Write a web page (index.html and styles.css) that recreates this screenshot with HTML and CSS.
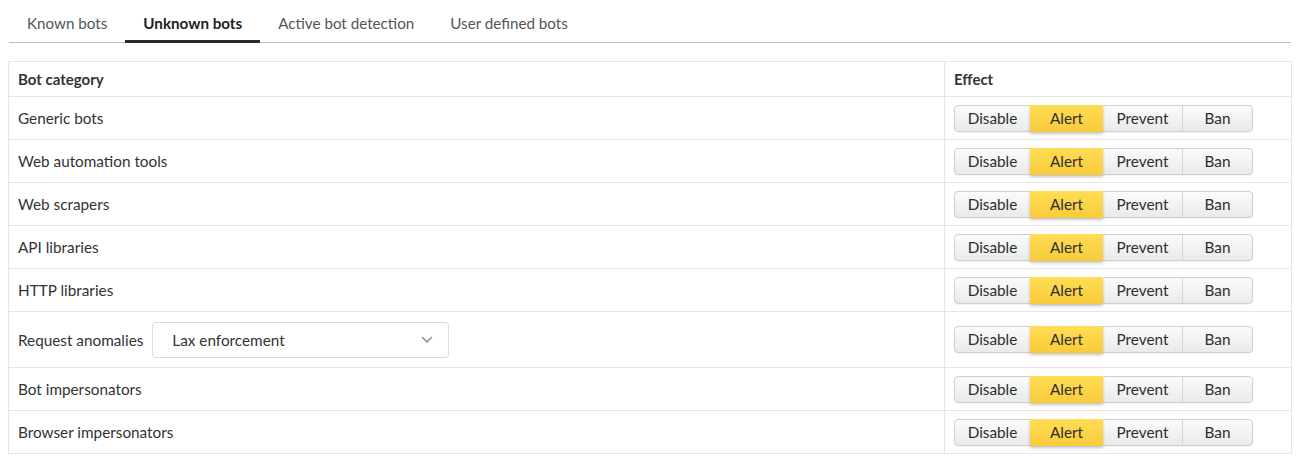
FILE: index.html
```html
<!DOCTYPE html>
<html lang="en">
<head>
<meta charset="utf-8">
<title>Unknown bots</title>
<link rel="stylesheet" href="styles.css">
</head>
<body>
<div class="page">
  <nav class="tabs">
    <a class="tab">Known bots</a>
    <a class="tab active">Unknown bots</a>
    <a class="tab">Active bot detection</a>
    <a class="tab">User defined bots</a>
  </nav>

  <table class="bots">
    <thead>
      <tr><th class="col-cat">Bot category</th><th class="col-eff">Effect</th></tr>
    </thead>
    <tbody>
      <tr><td>Generic bots</td><td class="eff"><div class="seg"><span class="b b1">Disable</span><span class="b b2 on">Alert</span><span class="b b3">Prevent</span><span class="b b4">Ban</span></div></td></tr>
      <tr><td>Web automation tools</td><td class="eff"><div class="seg"><span class="b b1">Disable</span><span class="b b2 on">Alert</span><span class="b b3">Prevent</span><span class="b b4">Ban</span></div></td></tr>
      <tr><td>Web scrapers</td><td class="eff"><div class="seg"><span class="b b1">Disable</span><span class="b b2 on">Alert</span><span class="b b3">Prevent</span><span class="b b4">Ban</span></div></td></tr>
      <tr><td>API libraries</td><td class="eff"><div class="seg"><span class="b b1">Disable</span><span class="b b2 on">Alert</span><span class="b b3">Prevent</span><span class="b b4">Ban</span></div></td></tr>
      <tr><td>HTTP libraries</td><td class="eff"><div class="seg"><span class="b b1">Disable</span><span class="b b2 on">Alert</span><span class="b b3">Prevent</span><span class="b b4">Ban</span></div></td></tr>
      <tr class="tall"><td><div class="withsel"><span>Request anomalies</span><div class="select"><span>Lax enforcement</span><svg class="chev" width="12" height="7" viewBox="0 0 12 7"><path d="M1 1 L6 6 L11 1" fill="none" stroke="#8c939c" stroke-width="1.6"/></svg></div></div></td><td class="eff"><div class="seg"><span class="b b1">Disable</span><span class="b b2 on">Alert</span><span class="b b3">Prevent</span><span class="b b4">Ban</span></div></td></tr>
      <tr><td>Bot impersonators</td><td class="eff"><div class="seg"><span class="b b1">Disable</span><span class="b b2 on">Alert</span><span class="b b3">Prevent</span><span class="b b4">Ban</span></div></td></tr>
      <tr><td>Browser impersonators</td><td class="eff"><div class="seg"><span class="b b1">Disable</span><span class="b b2 on">Alert</span><span class="b b3">Prevent</span><span class="b b4">Ban</span></div></td></tr>
    </tbody>
  </table>
</div>
</body>
</html>
```

FILE: styles.css
```css
html, body {
  margin: 0;
  padding: 0;
  background: #fff;
}
body {
  font-family: Lato, "Open Sans", sans-serif;
  font-size: 15.3px;
  color: #333;
}
.page {
  width: 1283px;
  padding: 0 0 0 8px;
}
.tabs {
  display: flex;
  border-bottom: 1px solid #bdbdbd;
  margin-left: 1px;
  height: 43px;
  box-sizing: border-box;
}
.tab {
  padding: 14px 18px 0;
  color: #555;
  font-size: 15.2px;
  line-height: 18px;
  height: 42px;
  box-sizing: border-box;
  cursor: pointer;
}
.tab.active {
  color: #222;
  font-weight: 700;
  border-bottom: 3px solid #2b2b2b;
  height: 43px;
  margin-bottom: -1px;
}
.bots {
  margin-top: 18px;
  width: 1284px;
  border-collapse: collapse;
  table-layout: fixed;
}
.bots th, .bots td {
  border: 1px solid #e6e6e6;
  text-align: left;
  padding: 0 9px;
  vertical-align: middle;
}
.bots th {
  font-weight: 700;
  height: 34px;
  font-size: 15px;
  color: #333;
}
.col-cat { width: 917px; }
.bots td {
  height: 42px;
}
.bots tr.tall td {
  height: 55px;
}
.withsel {
  display: flex;
  align-items: center;
  gap: 9px;
}
.select {
  width: 297px;
  height: 36px;
  box-sizing: border-box;
  border: 1px solid #dcdcdc;
  border-radius: 4px;
  display: flex;
  align-items: center;
  justify-content: space-between;
  padding: 0 15px 0 19px;
  color: #333;
}
.chev { display: block; }
.seg {
  display: flex;
  width: 299px;
  height: 27px;
  box-sizing: border-box;
  border: 1px solid #cfcfcf;
  border-radius: 4px;
  background: linear-gradient(#fbfbfb, #eaeaea);
  box-shadow: 0 1px 1px rgba(0,0,0,0.05);
}
.b {
  display: flex;
  align-items: center;
  justify-content: center;
  color: #2e2e2e;
  border-right: 1px solid #d4d4d4;
  line-height: 1;
  padding-top: 1px;
}
.b1 { width: 75px; }
.b2 { width: 72px; }
.b3 { width: 79px; }
.b4 { flex: 1; border-right: none; }
.b.on {
  background: linear-gradient(#ffdd55, #f9cb3a);
  border-right: none;
  margin: -1px 0 -1px -1px;
  padding: 2px 0 1px;
  width: 73px;
  box-shadow: 0 2px 3px rgba(0,0,0,0.22);
  position: relative;
}
```
